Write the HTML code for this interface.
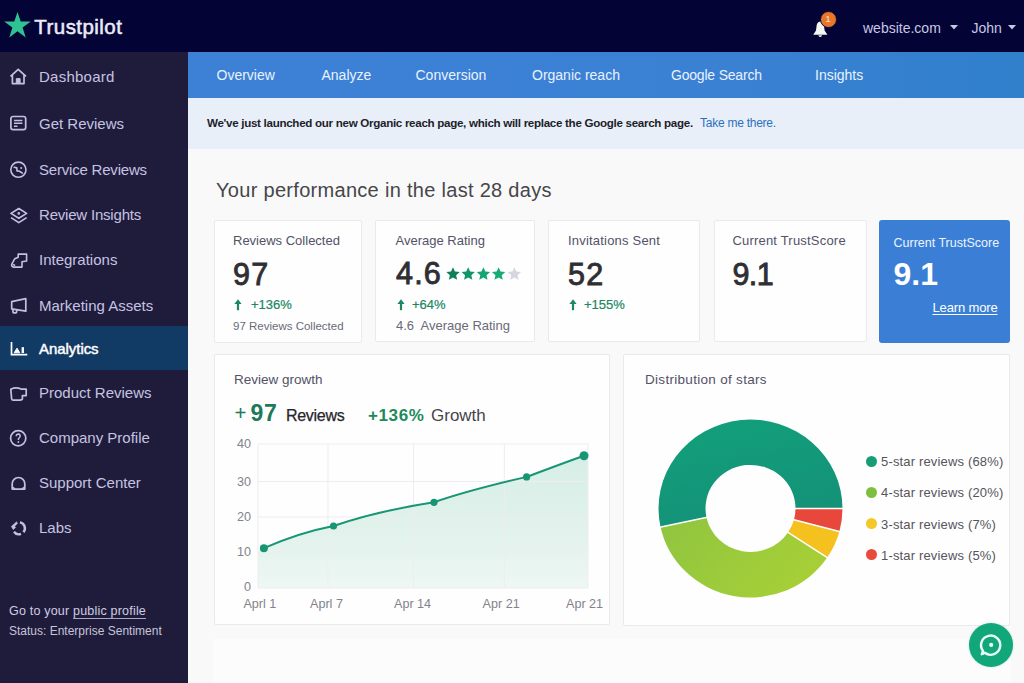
<!DOCTYPE html>
<html><head><meta charset="utf-8">
<style>
*{margin:0;padding:0;box-sizing:border-box}
html,body{width:1024px;height:683px;overflow:hidden;background:#f9f9f9;font-family:"Liberation Sans",sans-serif}
.a{position:absolute;white-space:nowrap;line-height:1}
#top{position:absolute;left:0;top:0;width:1024px;height:52px;background:#030335}
#side{position:absolute;left:0;top:52px;width:188px;height:631px;background:#1f1c3b}
#tabs{position:absolute;left:188px;top:52px;width:836px;height:46px;background:linear-gradient(90deg,#3c81d6 0%,#3a80d3 65%,#3080cc 100%)}
#notice{position:absolute;left:188px;top:98px;width:836px;height:51px;background:#e9eff8}
.card{position:absolute;background:#fefefe;border:1px solid #eaeaed;border-radius:2px}
.side-t{position:absolute;left:39px;font-size:15px;line-height:15px;color:#c6c3e2;white-space:nowrap}
.ico{position:absolute;left:9px;width:18px;height:18px}
.tab{position:absolute;top:68px;font-size:14px;line-height:14px;color:#eaf2ff;white-space:nowrap}
.ct{position:absolute;font-size:13px;line-height:13px;color:#535266;white-space:nowrap}
.big{position:absolute;font-size:30.5px;line-height:30.5px;color:#2f2f33;font-weight:normal;-webkit-text-stroke:0.9px #2f2f33;letter-spacing:1.2px;white-space:nowrap}
.gr{position:absolute;font-size:13px;line-height:13px;color:#1b8763;-webkit-text-stroke:0.2px #1b8763;white-space:nowrap}
.sub{position:absolute;font-size:13px;line-height:13px;color:#6a6a78;white-space:nowrap}
.ax{position:absolute;font-size:12.6px;line-height:12.6px;color:#83838a;white-space:nowrap}
.lg{position:absolute;left:881px;font-size:13px;line-height:13px;color:#55555c;letter-spacing:0.16px;white-space:nowrap}
.dot{position:absolute;left:866px;width:11px;height:11px;border-radius:50%}
</style></head><body>
<div id="top"></div>
<div id="side"></div>
<div id="tabs"></div>
<div id="notice"></div>

<!-- top bar -->
<svg class="a" style="left:4px;top:12px" width="27" height="26" viewBox="0 0 27 26"><polygon fill="#2fc393" points="13.5,0 16.7,9.6 26.8,9.6 18.6,15.5 21.7,25.4 13.5,19.2 5.3,25.4 8.4,15.5 0.2,9.6 10.3,9.6"/></svg>
<div class="a" style="left:34.3px;top:17px;font-size:20.5px;line-height:20.5px;color:#eceaf7;-webkit-text-stroke:0.55px #eceaf7;letter-spacing:0.45px">Trustpilot</div>

<svg class="a" style="left:811px;top:19px" width="20" height="20" viewBox="0 0 20 20"><path fill="#f4f6f4" d="M9.2,2.4 C6.8,2.4 5.8,4.6 5.5,7.4 L5,11.4 L2.2,15.8 H16.4 L13.6,11.4 L13.1,7.4 C12.8,4.6 11.8,2.4 9.2,2.4 Z M7.4,16.3 H11 A1.8,1.8 0 0 1 7.4,16.3 Z"/></svg>
<div class="a" style="left:819.5px;top:11px;width:17px;height:17px;border-radius:50%;background:#e8772e;border:1.6px solid #100a30;color:#ffe9c8;font-size:9px;line-height:14px;text-align:center">1</div>
<div class="a" style="left:863px;top:21px;font-size:14px;line-height:14px;color:#c9c8e3">website.com</div>
<svg class="a" style="left:950px;top:25px" width="8" height="5"><polygon points="0,0 8,0 4,4.5" fill="#c9c8e3"/></svg>
<div class="a" style="left:971.5px;top:21px;font-size:14px;line-height:14px;color:#c9c8e3">John</div>
<svg class="a" style="left:1008px;top:25px" width="8" height="5"><polygon points="0,0 8,0 4,4.5" fill="#c9c8e3"/></svg>

<!-- sidebar -->
<div class="a" style="left:0;top:326px;width:188px;height:43.5px;background:#113a64"></div>
<div class="side-t" style="top:69.3px;letter-spacing:0.25px">Dashboard</div>
<div class="side-t" style="top:116px">Get Reviews</div>
<div class="side-t" style="top:161.8px;letter-spacing:-0.2px">Service Reviews</div>
<div class="side-t" style="top:206.8px;letter-spacing:-0.2px">Review Insights</div>
<div class="side-t" style="top:251.8px">Integrations</div>
<div class="side-t" style="top:297.8px">Marketing Assets</div>
<div class="side-t" style="top:340.6px;color:#fff;-webkit-text-stroke:0.45px #fff;letter-spacing:-0.05px">Analytics</div>
<div class="side-t" style="top:384.8px">Product Reviews</div>
<div class="side-t" style="top:429.8px">Company Profile</div>
<div class="side-t" style="top:474.8px">Support Center</div>
<div class="side-t" style="top:519.8px">Labs</div>
<div class="a" style="left:9px;top:604.8px;font-size:12.5px;line-height:12.5px;color:#cfcde3;letter-spacing:0.2px">Go to your <span style="text-decoration:underline;text-underline-offset:2.5px;text-decoration-thickness:1px;text-decoration-color:#a9a6c8">public profile</span></div>
<div class="a" style="left:9px;top:625px;font-size:12px;line-height:12px;color:#c6c4da">Status: Enterprise Sentiment</div>

<!-- tabs -->
<div class="tab" style="left:216.5px">Overview</div>
<div class="tab" style="left:321.5px">Analyze</div>
<div class="tab" style="left:415.5px">Conversion</div>
<div class="tab" style="left:532px">Organic reach</div>
<div class="tab" style="left:671px;letter-spacing:-0.2px">Google Search</div>
<div class="tab" style="left:815px">Insights</div>

<!-- notice -->
<div class="a" style="left:207px;top:117.4px;font-size:11.6px;line-height:11.6px;font-weight:bold;color:#1e1e2a;letter-spacing:-0.3px">We've just launched our new Organic reach page, which will replace the Google search page.</div>
<div class="a" style="left:700px;top:117px;font-size:12px;line-height:12px;color:#2b6fc2;letter-spacing:-0.25px">Take me there.</div>

<!-- heading -->
<div class="a" style="left:216px;top:180px;font-size:20px;line-height:20px;color:#46464a;letter-spacing:0.3px">Your performance in the last 28 days</div>

<!-- cards -->
<div class="card" style="left:214px;top:220px;width:148px;height:123px"></div>
<div class="card" style="left:375px;top:220px;width:160px;height:122px"></div>
<div class="card" style="left:548px;top:220px;width:152px;height:122px"></div>
<div class="card" style="left:714px;top:220px;width:153px;height:122px"></div>
<div class="a" style="left:879px;top:220px;width:131px;height:123px;background:#3a7fd5;border-radius:3px"></div>

<div class="ct" style="left:233px;top:234px">Reviews Collected</div>
<div class="big" style="left:233px;top:259px">97</div>
<div class="gr" style="left:251px;top:298px">+136%</div>
<div class="sub" style="left:233px;top:320.7px;font-size:11.5px;line-height:11.5px">97 Reviews Collected</div>

<div class="ct" style="left:395.5px;top:234px">Average Rating</div>
<div class="big" style="left:396px;top:258px">4.6</div>
<div class="gr" style="left:412px;top:298px">+64%</div>
<div class="sub" style="left:396px;top:319px">4.6&nbsp; Average Rating</div>

<div class="ct" style="left:568px;top:234px;letter-spacing:0.2px">Invitations Sent</div>
<div class="big" style="left:568px;top:259px">52</div>
<div class="gr" style="left:584px;top:298px">+155%</div>

<div class="ct" style="left:732.4px;top:234px;letter-spacing:0.2px">Current TrustScore</div>
<div class="big" style="left:732.4px;top:259px;letter-spacing:-0.6px">9.1</div>

<div class="a" style="left:893.5px;top:236.5px;font-size:12.5px;line-height:12.5px;color:#eef4ff">Current TrustScore</div>
<div class="a" style="left:893.5px;top:258px;font-size:32px;line-height:32px;color:#fff;font-weight:bold">9.1</div>
<div class="a" style="left:932.5px;top:301px;font-size:13px;line-height:13px;color:#fff;text-decoration:underline;text-underline-offset:2px;letter-spacing:-0.15px">Learn more</div>

<!-- chart cards -->
<div class="card" style="left:214px;top:354px;width:396px;height:271px"></div>
<div class="card" style="left:623px;top:354px;width:387px;height:272px"></div>
<div class="a" style="left:213px;top:639px;width:798px;height:60px;background:#fcfcfc"></div>

<div class="ct" style="left:234px;top:373px;font-size:13.5px;line-height:13.5px">Review growth</div>
<div class="ct" style="left:645px;top:373px;font-size:13.5px;line-height:13.5px;letter-spacing:0.3px">Distribution of stars</div>

<!-- legend -->
<div class="dot" style="top:455.8px;background:#179d76"></div>
<div class="dot" style="top:486.8px;background:#7cc03e"></div>
<div class="dot" style="top:518px;background:#f5c829"></div>
<div class="dot" style="top:549px;background:#e84a3c"></div>
<div class="lg" style="top:455px">5-star reviews (68%)</div>
<div class="lg" style="top:486px">4-star reviews (20%)</div>
<div class="lg" style="top:517.5px">3-star reviews (7%)</div>
<div class="lg" style="top:548.5px">1-star reviews (5%)</div>

<!-- chat -->
<div class="a" style="left:968.5px;top:623px;width:44px;height:44px;border-radius:50%;background:#12a77a;box-shadow:0 0 2px rgba(18,167,122,0.35)"></div>


<!-- sidebar icons -->
<svg class="a" style="left:9px;top:67.5px" width="19" height="17" viewBox="0 0 19 17" fill="none" stroke="#c3bfe3" stroke-width="1.7" stroke-linejoin="round"><path d="M1.5,8.3 L9.2,1.3 L17,8.3 M3.4,6.8 V15.6 H15 V6.8"/><path d="M7.3,15.6 V10.6 H11.1 V15.6" fill="#c3bfe3" stroke-width="1"/></svg>
<svg class="a" style="left:9px;top:114.5px" width="19" height="17" viewBox="0 0 19 17" fill="none" stroke="#c3bfe3" stroke-width="1.7"><rect x="1.9" y="1.5" width="14.8" height="13.2" rx="2.2"/><path d="M5,5.4 H13.4 M5,8.3 H13.4 M5,11.2 H8.5" stroke-width="1.5"/></svg>
<svg class="a" style="left:9px;top:160.5px" width="19" height="19" viewBox="0 0 19 19" fill="none" stroke="#c3bfe3" stroke-width="1.6"><circle cx="9.4" cy="8.7" r="7.6"/><path d="M5.2,6.3 L7.8,6.9 L8,9.9 L10.5,10.3 L13.4,12.1" stroke-width="1.6" stroke-linejoin="round" stroke-linecap="round"/><circle cx="12.2" cy="6.9" r="1" fill="#c3bfe3" stroke="none"/></svg>
<svg class="a" style="left:9px;top:206.5px" width="20" height="18" viewBox="0 0 20 18" fill="none" stroke="#c3bfe3" stroke-width="1.7" stroke-linejoin="round"><path d="M9.8,1.5 L17.6,6.4 L9.8,11.3 L2,6.4 Z"/><path d="M2,10.6 L9.8,15.6 L17.6,10.6"/><circle cx="9.8" cy="6.4" r="1.3" fill="#c3bfe3" stroke="none"/></svg>
<svg class="a" style="left:9px;top:251.5px" width="20" height="18" viewBox="0 0 20 18" fill="none" stroke="#c3bfe3" stroke-width="1.6" stroke-linejoin="round"><path d="M9.2,2.1 H17.6 V9 L13,9.7 V15.1 H4.6 Q2.2,14.5 2.7,12.4 L5.8,6.7 L9.2,5.2 Z"/><path d="M4.4,12.6 L5.6,13.2" stroke-linecap="round"/></svg>
<svg class="a" style="left:9px;top:296.5px" width="20" height="18" viewBox="0 0 20 18" fill="none" stroke="#c3bfe3" stroke-width="1.7" stroke-linejoin="round"><path d="M2.7,4.6 L16.8,1.6 V14.2 L2.7,11.9 Z"/><path d="M4,12.3 V15 Q4,15.8 4.8,15.8 H6.8 Q7.6,15.8 7.6,15 V12.8"/></svg>
<svg class="a" style="left:9px;top:341px" width="20" height="16" viewBox="0 0 20 16" fill="none" stroke="#ffffff" stroke-width="1.7"><path d="M2.5,1 V13.6 H18.3"/><path d="M5.2,11.8 L8,7.2 L10.8,11.8 Z" fill="#fff" stroke-width="1"/><rect x="12.6" y="6.2" width="2.4" height="5.8" fill="#fff" stroke="none"/></svg>
<svg class="a" style="left:9px;top:386px" width="20" height="16" viewBox="0 0 20 16" fill="none" stroke="#c3bfe3" stroke-width="1.7" stroke-linejoin="round"><path d="M1.8,3.2 Q7,0.6 12.4,3.2 H17.2 V9.6 H13.4 V13 Q12.6,14.2 10.6,14.2 H4.2 Q2.8,14.2 2.6,12.6 Z"/></svg>
<svg class="a" style="left:9px;top:429px" width="19" height="19" viewBox="0 0 19 19" fill="none" stroke="#c3bfe3" stroke-width="1.7"><circle cx="9.2" cy="9.2" r="7.6"/><path d="M7.2,7.2 Q7.4,5 9.4,5 Q11.4,5.2 11.2,7.2 Q10.8,8.8 9.4,9.6 V11" stroke-width="1.4"/><circle cx="9.4" cy="13" r="0.9" fill="#c3bfe3" stroke="none"/></svg>
<svg class="a" style="left:9px;top:474.5px" width="20" height="17" viewBox="0 0 20 17" fill="none" stroke="#c3bfe3" stroke-width="1.7" stroke-linejoin="round"><path d="M3.2,14.1 V8.8 A6.3,6.3 0 1 1 15.8,8.8 V14.1 Z"/><path d="M3.2,11.8 L6.2,14.1 M15.8,11.8 L12.8,14.1" stroke-width="1.4"/></svg>
<svg class="a" style="left:9px;top:520px" width="19" height="17" viewBox="0 0 19 17" fill="none" stroke="#c3bfe3" stroke-width="2.4"><path d="M10.94,2.39 A6,6 0 0 1 14.5,12.16"/><path d="M11.95,13.94 A6,6 0 0 1 4.99,11.74"/><path d="M7.6,1.8 L2.4,6.4 L4.2,9.6 L6.6,7.4 L5.6,6.2 L8.4,3.6 Z" fill="#c3bfe3" stroke-width="0.6"/></svg>

<!-- card arrows & stars -->
<svg class="a" style="left:233px;top:298px" width="10" height="13" viewBox="0 0 10 13"><path d="M5,12.2 V5" stroke="#1b8763" stroke-width="2.2"/><path d="M1.4,6 L5,1.2 L8.6,6 Z" fill="#1b8763"/></svg>
<svg class="a" style="left:396px;top:298px" width="10" height="13" viewBox="0 0 10 13"><path d="M5,12.2 V5" stroke="#1b8763" stroke-width="2.2"/><path d="M1.4,6 L5,1.2 L8.6,6 Z" fill="#1b8763"/></svg>
<svg class="a" style="left:568px;top:298px" width="10" height="13" viewBox="0 0 10 13"><path d="M5,12.2 V5" stroke="#1b8763" stroke-width="2.2"/><path d="M1.4,6 L5,1.2 L8.6,6 Z" fill="#1b8763"/></svg>
<svg class="a" style="left:445px;top:266.5px" width="80" height="15" viewBox="0 0 80 15">
<defs><polygon id="st" points="7.00,0.20 8.94,4.53 13.66,5.04 10.14,8.22 11.11,12.86 7.00,10.50 2.89,12.86 3.86,8.22 0.34,5.04 5.06,4.53"/></defs>
<use href="#st" x="1" fill="#0f7e59"/><use href="#st" x="16.2" fill="#12946a"/><use href="#st" x="31.4" fill="#15a572"/><use href="#st" x="46.6" fill="#17ac75"/><use href="#st" x="62.4" fill="#d6d5e0"/></svg>

<!-- line chart -->
<svg class="a" style="left:214px;top:354px" width="396" height="272" viewBox="214 354 396 272">
<defs><linearGradient id="gf" x1="0" y1="0" x2="0" y2="1"><stop offset="0" stop-color="#d6eee5"/><stop offset="0.7" stop-color="#e4f3ed"/><stop offset="1" stop-color="#eef7f4"/></linearGradient></defs>
<path d="M258,550.8 L263.9,548.2 C287,538 310,530.5 333.5,526.0 C367,514.5 400,507.5 434.0,502.3 C465,491.5 496,484 526.6,476.9 C546,469.8 565,462.5 584.0,455.8 L588,454.3 V588 H258 Z" fill="url(#gf)"/>
<g stroke="#ededf0" stroke-width="1" fill="none">
<path d="M258,444 H588 M258,481.5 H588 M258,517 H588 M258,552 H588 M258,588 H588"/>
<path d="M258,444 V588 M328,444 V588 M413.6,444 V588 M504.3,444 V588 M588,444 V588"/>
</g>
<path d="M263.9,548.2 C287,538 310,530.5 333.5,526.0 C367,514.5 400,507.5 434.0,502.3 C465,491.5 496,484 526.6,476.9 C546,469.8 565,462.5 584.0,455.8" fill="none" stroke="#179674" stroke-width="2"/>
<g fill="#179674"><circle cx="263.9" cy="548.2" r="4"/><circle cx="333.5" cy="526" r="3.6"/><circle cx="434" cy="502.3" r="3.6"/><circle cx="526.6" cy="476.9" r="3.6"/><circle cx="584" cy="455.8" r="4.5"/></g>
</svg>
<div class="ax" style="left:237px;top:437.5px">40</div>
<div class="ax" style="left:237px;top:475.5px">30</div>
<div class="ax" style="left:237px;top:510.8px">20</div>
<div class="ax" style="left:237px;top:545.8px">10</div>
<div class="ax" style="left:244px;top:581.2px">0</div>
<div class="ax" style="left:243.4px;top:598.4px">Aprl 1</div>
<div class="ax" style="left:310px;top:598.4px">Aprl 7</div>
<div class="ax" style="left:394px;top:598.4px">Apr 14</div>
<div class="ax" style="left:482.6px;top:598.4px">Apr 21</div>
<div class="ax" style="left:566px;top:598.4px">Apr 21</div>
<div class="a" style="left:234.5px;top:402.5px;font-size:20.5px;line-height:20.5px;color:#1d7a58">+</div><div class="a" style="left:250.5px;top:401.5px;font-size:23px;line-height:23px;color:#1d7a58;font-weight:bold;letter-spacing:0.8px">97</div>
<div class="a" style="left:286px;top:407.5px;font-size:16px;line-height:16px;color:#26262a;letter-spacing:-0.3px;-webkit-text-stroke:0.25px #26262a">Reviews</div>
<div class="a" style="left:368px;top:406.5px;font-size:17px;line-height:17px;color:#1d8a5c;font-weight:bold;letter-spacing:0.6px">+136%</div>
<div class="a" style="left:431px;top:406.5px;font-size:17px;line-height:17px;color:#45454a">Growth</div>

<!-- donut -->
<svg class="a" style="left:623px;top:354px" width="387" height="272" viewBox="623 354 387 272">
<path fill="#e8483b" d="M842.5,508.5 A92,89 0 0 1 839.4,531.5 L794.0,519.8 A45,43.5 0 0 0 795.5,508.5 Z"/>
<path fill="#f4c11f" d="M839.4,531.5 A92,89 0 0 1 827.2,557.6 L788.0,532.5 A45,43.5 0 0 0 794.0,519.8 Z"/>
<defs><linearGradient id="lg1" x1="0" y1="0" x2="1" y2="0.4"><stop offset="0" stop-color="#8fc540"/><stop offset="1" stop-color="#a6cf37"/></linearGradient><linearGradient id="dg1" x1="0" y1="0" x2="0.3" y2="1"><stop offset="0" stop-color="#12a07b"/><stop offset="1" stop-color="#149278"/></linearGradient></defs><path fill="url(#lg1)" d="M827.2,557.6 A92,89 0 0 1 660.5,527.0 L706.5,517.5 A45,43.5 0 0 0 788.0,532.5 Z"/>
<path fill="url(#dg1)" d="M660.5,527.0 A92,89 0 1 1 842.5,508.5 L795.5,508.5 A45,43.5 0 1 0 706.5,517.5 Z"/>
<g stroke="#fff" stroke-width="1.5">
<line x1="793.5" y1="508.5" x2="844.5" y2="508.5"/>
<line x1="792.0" y1="519.2" x2="841.3" y2="532.1"/>
<line x1="786.4" y1="531.4" x2="828.9" y2="558.7"/>
<line x1="708.4" y1="517.1" x2="658.6" y2="527.4"/>
</g>
</svg>
<svg class="a" style="left:968.5px;top:623px" width="44" height="44" viewBox="0 0 44 44"><path d="M15.8,29.8 L12.8,31.2 L14,28 A9.6,9.6 0 1 1 15.8,29.8 Z" fill="none" stroke="#e8fff6" stroke-width="2.4" stroke-linejoin="round"/><circle cx="22.2" cy="21.9" r="2.1" fill="#e8fff6"/></svg>
</body></html>
